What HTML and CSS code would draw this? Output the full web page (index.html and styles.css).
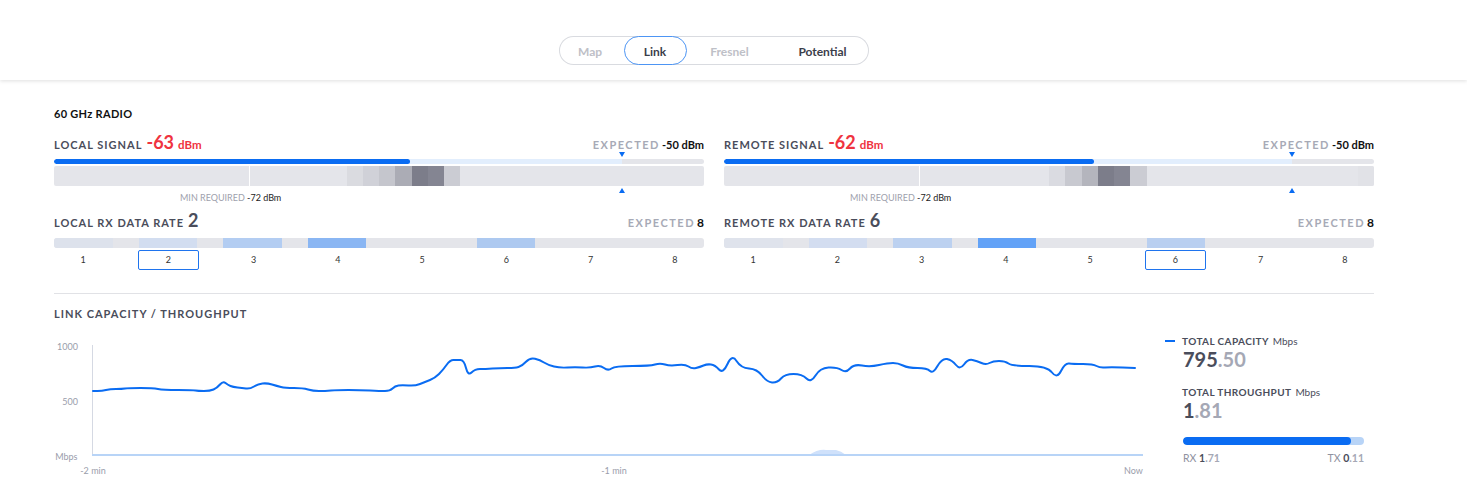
FILE: index.html
```html
<!DOCTYPE html>
<html lang="en">
<head>
<meta charset="utf-8">
<title>Link</title>
<link rel="stylesheet" href="styles.css">
</head>
<body>
<header class="topbar">
  <nav class="tabs">
    <span class="tab tab-map is-disabled">Map</span>
    <span class="tab tab-link is-active">Link</span>
    <span class="tab tab-fresnel is-disabled">Fresnel</span>
    <span class="tab tab-potential">Potential</span>
  </nav>
</header>

<main class="main">
  <h2 class="section-title">60 GHz RADIO</h2>

  <div class="radio-grid">
    <!-- LOCAL -->
    <section class="panel">
      <div class="row-head">
        <span class="label">LOCAL SIGNAL</span>
        <span class="big red">-63</span><span class="unit red">dBm</span>
        <span class="spacer"></span>
        <span class="exp-label">EXPECTED</span><span class="exp-val">-50 dBm</span>
      </div>
      <div class="sig-wrap">
        <div class="sig-track">
          <div class="sig-range" style="width:87.4%">
            <div class="sig-fill" style="width:62.7%"></div>
          </div>
        </div>
        <div class="sig-strip">
          <span class="divider"></span>
          <span class="cell" style="grid-column:19;background:#dadbe0"></span>
          <span class="cell" style="grid-column:20;background:#d0d1d8"></span>
          <span class="cell" style="grid-column:21;background:#c5c6cd"></span>
          <span class="cell" style="grid-column:22;background:#abacb5"></span>
          <span class="cell" style="grid-column:23;background:#7c7d8a"></span>
          <span class="cell" style="grid-column:24;background:#848592"></span>
          <span class="cell" style="grid-column:25;background:#cbccd3"></span>
        </div>
        <span class="marker marker-down" style="left:87.4%"></span>
        <span class="marker marker-up" style="left:87.4%"></span>
      </div>
      <div class="min-req">MIN REQUIRED <b>-72 dBm</b></div>

      <div class="row-head rate-head">
        <span class="label">LOCAL RX DATA RATE</span>
        <span class="big">2</span>
        <span class="spacer"></span>
        <span class="exp-label">EXPECTED</span><span class="exp-num">8</span>
      </div>
      <div class="rate-track">
        <span class="seg" style="background:#dde2ec"></span>
        <span class="seg" style="background:#d2ddf0"></span>
        <span class="seg" style="background:#b3cdf2"></span>
        <span class="seg" style="background:#8ab6f3"></span>
        <span class="seg"></span>
        <span class="seg" style="background:#adc9f0"></span>
        <span class="seg"></span>
        <span class="seg"></span>
      </div>
      <div class="rate-nums">
        <span class="num">1</span>
        <span class="num sel">2</span>
        <span class="num">3</span>
        <span class="num">4</span>
        <span class="num">5</span>
        <span class="num">6</span>
        <span class="num">7</span>
        <span class="num">8</span>
      </div>
    </section>

    <!-- REMOTE -->
    <section class="panel">
      <div class="row-head">
        <span class="label">REMOTE SIGNAL</span>
        <span class="big red">-62</span><span class="unit red">dBm</span>
        <span class="spacer"></span>
        <span class="exp-label">EXPECTED</span><span class="exp-val">-50 dBm</span>
      </div>
      <div class="sig-wrap">
        <div class="sig-track">
          <div class="sig-range" style="width:87.4%">
            <div class="sig-fill" style="width:65.1%"></div>
          </div>
        </div>
        <div class="sig-strip">
          <span class="divider"></span>
          <span class="cell" style="grid-column:21;background:#dadbe1"></span>
          <span class="cell" style="grid-column:22;background:#c8c9d0"></span>
          <span class="cell" style="grid-column:23;background:#b4b5bd"></span>
          <span class="cell" style="grid-column:24;background:#7c7d8a"></span>
          <span class="cell" style="grid-column:25;background:#848592"></span>
          <span class="cell" style="grid-column:26;background:#cbccd3"></span>
          <span class="cell" style="grid-column:40;background:#e1e2e7"></span>
        </div>
        <span class="marker marker-down" style="left:87.4%"></span>
        <span class="marker marker-up" style="left:87.4%"></span>
      </div>
      <div class="min-req">MIN REQUIRED <b>-72 dBm</b></div>

      <div class="row-head rate-head">
        <span class="label">REMOTE RX DATA RATE</span>
        <span class="big">6</span>
        <span class="spacer"></span>
        <span class="exp-label">EXPECTED</span><span class="exp-num">8</span>
      </div>
      <div class="rate-track">
        <span class="seg" style="background:#dfe3ec"></span>
        <span class="seg" style="background:#d3ddf0"></span>
        <span class="seg" style="background:#bcd1f0"></span>
        <span class="seg" style="background:#62a2f7"></span>
        <span class="seg"></span>
        <span class="seg" style="background:#b9cff0"></span>
        <span class="seg"></span>
        <span class="seg"></span>
      </div>
      <div class="rate-nums">
        <span class="num">1</span>
        <span class="num">2</span>
        <span class="num">3</span>
        <span class="num">4</span>
        <span class="num">5</span>
        <span class="num sel">6</span>
        <span class="num">7</span>
        <span class="num">8</span>
      </div>
    </section>
  </div>

  <div class="divline"></div>

  <h3 class="chart-title">LINK CAPACITY / THROUGHPUT</h3>

  <div class="chart-row">
    <svg class="chart" width="1100" height="145" viewBox="0 -3 1100 145">
      <g class="axis-text">
        <text x="24" y="11.5" text-anchor="end">1000</text>
        <text x="24" y="66.5" text-anchor="end">500</text>
        <text x="23.5" y="122" text-anchor="end">Mbps</text>
        <text x="39" y="136" text-anchor="middle">-2 min</text>
        <text x="560" y="136" text-anchor="middle">-1 min</text>
        <text x="1079.5" y="136" text-anchor="middle">Now</text>
      </g>
      <line x1="38.5" y1="7" x2="38.5" y2="117" class="y-axis"/>
      <path d="M755 117 Q 764 111 772 112 L 782 112 Q 787 113 792 117 Z" class="tp-area"/>
      <line x1="38" y1="117" x2="1089" y2="117" class="tp-line"/>
      <path class="cap-line" d="M39,53 L43.5,53 Q48,53 52,52 Q56,51 62,51 Q68,51 71,50.5 Q74,50 86.5,50 Q99,50 104,51 Q109,52 124,52 Q139,52 141.5,52.5 Q144,53 150,53 Q156,53 159.5,51.5 Q163,50 166,46.5 Q169,43 171.5,45 Q174,47 176.5,48 Q179,49 183.5,49.5 Q188,50 192,50.5 Q196,51 200,48.5 Q204,46 208.5,45.5 Q213,45 218,46.5 Q223,48 227,49 Q231,50 240,50 Q249,50 254,51.5 Q259,53 265,53 Q271,53 277,52.5 Q283,52 294.5,52 Q306,52 316,52.5 Q326,53 331,53 Q336,53 338.5,50.5 Q341,48 344.5,47.5 Q348,47 354.5,47.5 Q361,48 366,46 Q371,44 376,42 Q381,40 385,36 Q389,32 392.5,27 Q396,22 399.5,22 Q403,22 406.5,22 Q410,22 412,30 Q414,38 417.5,34.5 Q421,31 426,31 Q431,31 438.5,30.5 Q446,30 453.5,30 Q461,30 464.5,29 Q468,28 472,23.75 Q476,19.5 481,20.75 Q486,22 490,24.5 Q494,27 500,28.5 Q506,30 513.5,29.5 Q521,29 528.5,29.5 Q536,30 541,28.5 Q546,27 550,30 Q554,33 557.5,30.5 Q561,28 578.5,28 Q596,28 601,26.5 Q606,25 611,26.5 Q616,28 623.5,27 Q631,26 634.5,28.5 Q638,31 642,30 Q646,29 649.5,27.5 Q653,26 657,26.5 Q661,27 665,31.5 Q669,36 673.5,26 Q678,16 682.5,23 Q687,30 695,30.5 Q703,31 708,37.5 Q713,44 718,44.5 Q723,45 727,40.5 Q731,36 739.5,36 Q748,36 752.5,40.5 Q757,45 761.5,37.5 Q766,30 774.5,29.5 Q783,29 787.5,32 Q792,35 796,30.5 Q800,26 808,27.5 Q816,29 825,27 Q834,25 839,25 Q844,25 849,27.5 Q854,30 863.5,30 Q873,30 876,33 Q879,36 883.5,28 Q888,20 893,21 Q898,22 902,27 Q906,32 910,26.5 Q914,21 918.5,22 Q923,23 927.5,25 Q932,27 935.5,25 Q939,23 945,23 Q951,23 954.5,25.5 Q958,28 975.5,28 Q993,28 998,34.5 Q1003,41 1007,33 Q1011,25 1015,25.5 Q1019,26 1029,26 Q1039,26 1042.5,28 Q1046,30 1051,29.5 Q1056,29 1068.5,29.5 L1081,30"/>
    </svg>

    <aside class="legend">
      <div class="lg-head"><span class="lg-dash"></span>TOTAL CAPACITY<span class="lg-unit">Mbps</span></div>
      <div class="lg-value">795<span class="frac">.50</span></div>
      <div class="lg-head lg-second">TOTAL THROUGHPUT<span class="lg-unit">Mbps</span></div>
      <div class="lg-value">1<span class="frac">.81</span></div>
      <div class="lg-bar"><div class="lg-bar-fill" style="width:92.8%"></div></div>
      <div class="lg-rxtx">
        <span>RX <b>1</b><i>.71</i></span>
        <span>TX <b>0</b><i>.11</i></span>
      </div>
    </aside>
  </div>
</main>
</body>
</html>
```

FILE: styles.css
```css
html, body {
  margin: 0;
  background: #fff;
}
body {
  font-family: Lato, "Open Sans", "Liberation Sans", sans-serif;
  color: #4a4d5b;
}

/* ---------- top bar ---------- */
.topbar {
  height: 80px;
  box-sizing: border-box;
  padding: 36px 40px 0 0;
  display: flex;
  justify-content: center;
  align-items: flex-start;
  box-shadow: 0 1px 4px rgba(0, 0, 0, 0.13);
  position: relative;
}
.tabs {
  display: flex;
  width: 310px;
  height: 29px;
  box-sizing: border-box;
  border-radius: 15px;
  box-shadow: inset 0 0 0 1px #d9dbe0;
}
.tab {
  height: 29px;
  box-sizing: border-box;
  padding-top: 2px;
  display: flex;
  align-items: center;
  justify-content: center;
  font-size: 12px;
  font-weight: 700;
  color: #3b3e4a;
  border-radius: 15px;
}
.tab.is-disabled { color: #bec0c7; }
.tab.is-active { border: 1px solid #4d95f4; }
.tab-map { width: 63px; margin-left: 0; }
.tab-link { width: 63px; margin-left: 2px; }
.tab-fresnel { width: 82px; margin-left: 2px; }
.tab-potential { width: 90px; margin-left: 7px; }

/* ---------- main ---------- */
.main {
  padding: 26px 93px 0 54px;
}
.section-title {
  margin: 0;
  font-size: 11px;
  font-weight: 700;
  line-height: 15px;
  color: #111;
  letter-spacing: 0.3px;
}
.radio-grid {
  display: grid;
  grid-template-columns: 1fr 1fr;
  column-gap: 20px;
  margin-top: 11px;
}

.row-head {
  display: flex;
  align-items: baseline;
  height: 20px;
  line-height: 20px;
  white-space: nowrap;
}
.label {
  font-size: 11px;
  font-weight: 700;
  letter-spacing: 1px;
  color: #4a4d5b;
}
.big {
  font-size: 18px;
  font-weight: 700;
  margin-left: 4px;
  color: #4a4d5b;
}
.unit {
  font-size: 11.5px;
  font-weight: 700;
  margin-left: 4px;
}
.red { color: #ef3340 !important; }
.spacer { flex: 1; }
.exp-label {
  font-size: 11px;
  font-weight: 700;
  letter-spacing: 1.5px;
  color: #a7aab6;
}
.exp-val {
  font-size: 11px;
  font-weight: 700;
  color: #111;
  margin-left: 2px;
}
.exp-num {
  font-size: 12px;
  font-weight: 700;
  color: #111;
  margin-left: 2px;
}

/* signal bar */
.sig-wrap {
  position: relative;
  margin-top: 7px;
}
.sig-track {
  height: 5px;
  background: #e4e5ea;
  border-radius: 3px;
  overflow: hidden;
}
.sig-range {
  height: 100%;
  background: #e2eefd;
}
.sig-fill {
  height: 100%;
  background: #0a6cf2;
  border-radius: 3px;
}
.sig-strip {
  display: grid;
  grid-template-columns: repeat(40, 1fr);
  height: 20px;
  margin-top: 2px;
  background: #e4e5ea;
  border-radius: 2px;
  overflow: hidden;
}
.cell { grid-row: 1; }
.divider {
  grid-row: 1;
  grid-column: 13;
  border-left: 1px solid #fff;
}
.marker {
  position: absolute;
  width: 0;
  height: 0;
  margin-left: -3.5px;
  border-left: 3.5px solid transparent;
  border-right: 3.5px solid transparent;
}
.marker-down {
  top: -7px;
  border-top: 5px solid #0a6cf2;
}
.marker-up {
  top: calc(100% + 2px);
  border-bottom: 5px solid #0a6cf2;
}
.min-req {
  margin-top: 6px;
  line-height: 12px;
  font-size: 9px;
  padding-left: 126px;
  color: #9ea1ad;
  white-space: nowrap;
}
.min-req b {
  font-weight: 400;
  color: #222;
}

/* rate */
.rate-head { margin-top: 6px; }
.rate-track {
  display: flex;
  gap: 26px;
  height: 10px;
  margin-top: 8px;
  background: #e4e5ea;
  border-radius: 3px;
  overflow: hidden;
}
.seg { flex: 1; }
.rate-nums {
  display: flex;
  gap: 26px;
  margin-top: 2px;
}
.num {
  flex: 1;
  height: 20px;
  line-height: 20px;
  text-align: center;
  font-size: 9px;
  color: #333;
  box-sizing: border-box;
  border-radius: 2px;
}
.num.sel {
  border: 1px solid #1f74ee;
  line-height: 18px;
}

.divline {
  height: 1px;
  background: #e1e2e6;
  margin-top: 23px;
}
.chart-title {
  margin: 13px 0 0;
  line-height: 14px;
  font-size: 11px;
  font-weight: 700;
  letter-spacing: 1px;
  color: #4a4d5b;
}

/* chart */
.chart-row {
  display: flex;
  margin-top: 14px;
}
.chart {
  flex: none;
  display: block;
  overflow: visible;
}
.axis-text text {
  font-family: Lato, "Open Sans", sans-serif;
  font-size: 9px;
  fill: #9a9dab;
}
.y-axis {
  stroke: #d5d9e3;
  stroke-width: 1;
}
.tp-line {
  stroke: #b8d4f7;
  stroke-width: 2;
}
.tp-area {
  fill: #cfe1fb;
}
.cap-line {
  fill: none;
  stroke: #0a6cf2;
  stroke-width: 2;
  stroke-linejoin: round;
  stroke-linecap: round;
}

/* legend */
.legend {
  margin-left: 11px;
  width: 209px;
}
.lg-head {
  display: flex;
  align-items: center;
  line-height: 12px;
  font-size: 10px;
  letter-spacing: 0.4px;
  font-weight: 700;
  color: #4a4d5b;
  white-space: nowrap;
}
.lg-dash {
  width: 10px;
  height: 2px;
  background: #0a6cf2;
  margin-right: 7px;
}
.lg-unit {
  font-weight: 400;
  margin-left: 4px;
  font-size: 10px;
  letter-spacing: 0;
}
.lg-second {
  margin-top: 16px;
  padding-left: 17px;
}
.lg-value {
  padding-left: 18px;
  margin-top: 1px;
  font-size: 20px;
  font-weight: 700;
  line-height: 22px;
  color: #4a4d5b;
}
.frac { color: #a5a8b5; }
.lg-bar {
  margin: 16px 0 0 18px;
  width: 181px;
  height: 8px;
  border-radius: 4px;
  background: #b8d4f7;
  overflow: hidden;
}
.lg-bar-fill {
  height: 100%;
  background: #0a6cf2;
  border-radius: 4px;
}
.lg-rxtx {
  margin: 7px 0 0 18px;
  width: 181px;
  display: flex;
  justify-content: space-between;
  font-size: 10.5px;
  line-height: 12px;
  color: #8f92a0;
}
.lg-rxtx b {
  font-weight: 700;
  color: #4a4d5b;
}
.lg-rxtx i {
  font-style: normal;
  font-weight: 700;
  color: #a5a8b5;
}
```
